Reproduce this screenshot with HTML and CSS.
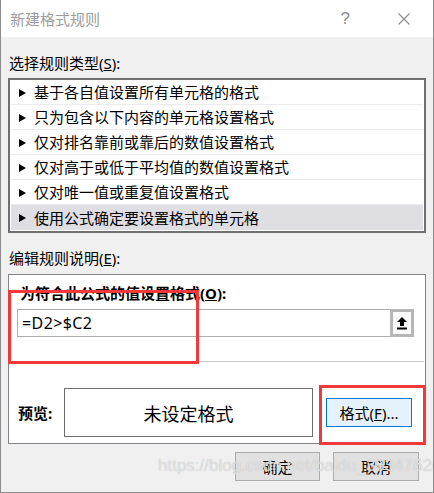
FILE: index.html
```html
<!DOCTYPE html>
<html lang="zh-CN">
<head>
    <meta charset="UTF-8">
    <title>新建格式规则</title>
    <link rel="stylesheet" href="styles.css">
</head>
<body>
    <div class="dialog">
        <!-- Title bar -->
        <div class="titlebar">
            <span class="title">新建格式规则</span>
            <span class="help">?</span>
            <svg class="close" width="12" height="12" viewBox="0 0 12 12">
                <path d="M0.5 0.5 L11.5 11.5 M11.5 0.5 L0.5 11.5" stroke="#8a8a8a" stroke-width="1.1" fill="none"/>
            </svg>
        </div>

        <div class="content">
            <div class="label first">选择规则类型(<u>S</u>):</div>
            <div class="rule-list">
                <div class="rule"><span class="arrow"></span>基于各自值设置所有单元格的格式</div>
                <div class="rule"><span class="arrow"></span>只为包含以下内容的单元格设置格式</div>
                <div class="rule"><span class="arrow"></span>仅对排名靠前或靠后的数值设置格式</div>
                <div class="rule"><span class="arrow"></span>仅对高于或低于平均值的数值设置格式</div>
                <div class="rule"><span class="arrow"></span>仅对唯一值或重复值设置格式</div>
                <div class="rule selected"><span class="arrow"></span>使用公式确定要设置格式的单元格</div>
            </div>

            <div class="label second">编辑规则说明(<u>E</u>):</div>
            <div class="panel">
                <div class="panel-top">
                    <div class="label bold">为符合此公式的值设置格式(<u>O</u>):</div>
                    <div class="formula">
                        <span class="formula-text">=D2&gt;$C2</span>
                        <span class="collapse-btn">
                            <svg width="10" height="13" viewBox="0 0 10 13">
                                <path d="M5 0 L0 5 L3 5 L3 9 L7 9 L7 5 L10 5 Z" fill="#000"/>
                                <rect x="0" y="10.5" width="10" height="2" fill="#000"/>
                            </svg>
                        </span>
                    </div>
                </div>
                <div class="preview-row">
                    <span class="preview-label">预览:</span>
                    <div class="preview-box">未设定格式</div>
                    <button class="btn format-btn">格式(<u>F</u>)...</button>
                </div>
            </div>

            <div class="actions">
                <button class="btn">确定</button>
                <button class="btn">取消</button>
            </div>
        </div>

        <!-- annotation overlays -->
        <div class="mark mark-formula"></div>
        <div class="mark mark-format"></div>
        <div class="watermark">https://blog.csdn.net/baidu_39347626</div>
    </div>
</body>
</html>
```

FILE: styles.css
```css
body {
    margin: 0;
    font-family: "Noto Sans", "Noto Sans CJK SC", sans-serif;
    font-size: 15px;
    color: #000;
}
.dialog {
    position: relative;
    width: 434px;
    height: 493px;
    box-sizing: border-box;
    border: 1px solid #8c8c8c;
    border-top: none;
    background: #f0f0f0;
    overflow: hidden;
}
.titlebar {
    height: 37px;
    background: #fff;
    display: flex;
    align-items: center;
    padding-left: 9px;
}
.title {
    color: #9d9d9d;
    line-height: 20px;
}
.help {
    margin-left: auto;
    color: #8a8a8a;
    font-size: 17px;
    font-family: "Liberation Sans", sans-serif;
    margin-right: 48px;
}
.close {
    margin-right: 23px;
}
.content {
    padding: 0 7px;
}
.label {
    line-height: 20px;
}
.label.first {
    margin-top: 16px;
    padding-left: 1px;
}
.label.second {
    margin-top: 15px;
    padding-left: 1px;
}
.label.bold {
    font-weight: bold;
    padding-left: 3px;
}
.rule-list {
    margin-top: 5px;
    border: 2px solid #6f6f6f;
    background: #fff;
    padding: 0 1px 1px 1px;
}
.rule {
    height: 25px;
    box-sizing: border-box;
    border-bottom: 1px solid #ececec;
    display: flex;
    align-items: center;
    padding: 1px 0 0 8px;
    line-height: 23px;
}
.rule.selected {
    background: #dfdee3;
    border-bottom: none;
}
.arrow {
    width: 0;
    height: 0;
    border-left: 7px solid #000;
    border-top: 4px solid transparent;
    border-bottom: 4px solid transparent;
    margin-right: 8px;
}
.panel {
    margin-top: 6px;
    height: 170px;
    box-sizing: border-box;
    border: 1px solid #838389;
    background: #fff;
}
.panel-top {
    margin: 0 1px;
    padding: 8px 10px 24px 7px;
    border-bottom: 1px solid #c9c9c9;
}
.formula {
    margin-top: 6px;
    height: 28px;
    box-sizing: border-box;
    border: 1px solid #adadad;
    display: flex;
    align-items: center;
}
.formula-text {
    flex: 1;
    padding-left: 4px;
    font-size: 16px;
    letter-spacing: 0.4px;
}
.collapse-btn {
    width: 24px;
    height: 28px;
    margin-right: -1px;
    box-sizing: border-box;
    border: 3px solid #b6b6b6;
    background: #fafafa;
    display: flex;
    align-items: center;
    justify-content: center;
}
.preview-row {
    display: flex;
    align-items: center;
    padding: 26px 0 6px 9px;
}
.preview-label {
    width: 46px;
    font-weight: bold;
}
.preview-box {
    width: 249px;
    height: 49px;
    box-sizing: border-box;
    border: 1px solid #6d6d6d;
    display: flex;
    align-items: center;
    justify-content: center;
    font-size: 18px;
    margin-right: 13px;
}
.btn {
    font-family: inherit;
    font-size: 15px;
    height: 29px;
    width: 85px;
    padding: 0;
    box-sizing: border-box;
    border: 1px solid #adadad;
    background: #e1e1e1;
    color: #000;
}
.format-btn {
    width: 86px;
    border-color: #0078d7;
    background: #e5f1fb;
}
.actions {
    display: flex;
    justify-content: flex-end;
    gap: 13px;
    margin-top: 8px;
    padding-right: 7px;
}
.actions .btn:last-child {
    width: 86px;
}
.mark {
    position: absolute;
    box-sizing: border-box;
    border: 3px solid #f0393b;
}
.mark-formula {
    left: 7px;
    top: 290px;
    width: 191px;
    height: 74px;
}
.mark-format {
    left: 318px;
    top: 385px;
    width: 107px;
    height: 60px;
}
.watermark {
    position: absolute;
    left: 157px;
    top: 456px;
    font-family: "Liberation Sans", sans-serif;
    font-size: 17px;
    color: rgba(255, 255, 255, 0.55);
    text-shadow: 0 0 1px #b4b4b4;
    white-space: nowrap;
}
```
